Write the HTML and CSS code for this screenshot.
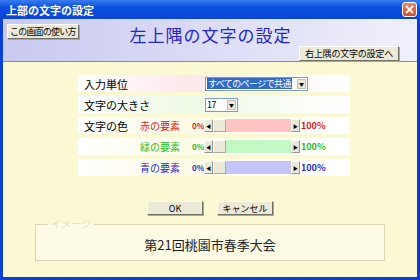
FILE: index.html
```html
<!DOCTYPE html>
<html lang="ja">

<head>
    <meta charset="UTF-8">
    <title>上部の文字の設定</title>
    <link rel="stylesheet" href="styles.css">
</head>

<body>
    <div class="window">
        <div class="title-bar">
            <span class="title-text">上部の文字の設定</span>
            <span class="close-btn">
                <svg width="9" height="9" viewBox="0 0 9 9">
                    <path d="M1 1 L8 8 M8 1 L1 8" stroke="#fff" stroke-width="1.8" />
                </svg>
            </span>
        </div>

        <div class="header">
            <div class="header-top">
                <button class="btn help-btn">この画面の使い方</button>
                <h1 class="page-title">左上隅の文字の設定</h1>
            </div>
            <div class="header-bottom">
                <button class="btn next-btn">右上隅の文字の設定へ</button>
            </div>
        </div>

        <div class="content">
            <div class="form">
                <div class="row row-pink">
                    <span class="label">入力単位</span>
                    <div class="select wide">
                        <span class="select-value"><span class="selected">すべてのページで共通</span></span>
                        <span class="drop-btn">&#9660;</span>
                    </div>
                </div>
                <div class="row row-green">
                    <span class="label">文字の大きさ</span>
                    <div class="select small">
                        <span class="select-value">17</span>
                        <span class="drop-btn">&#9660;</span>
                    </div>
                </div>
                <div class="row row-plain">
                    <span class="label">文字の色</span>
                    <span class="part red">赤の要素</span>
                    <span class="pct red">0%</span>
                    <div class="scroll">
                        <span class="arrow">&#9664;</span>
                        <span class="thumb"></span>
                        <span class="track track-red"></span>
                        <span class="arrow">&#9654;</span>
                    </div>
                    <span class="pct-max red">100%</span>
                </div>
                <div class="row row-plain">
                    <span class="label"></span>
                    <span class="part green">緑の要素</span>
                    <span class="pct green">0%</span>
                    <div class="scroll">
                        <span class="arrow">&#9664;</span>
                        <span class="thumb"></span>
                        <span class="track track-green"></span>
                        <span class="arrow">&#9654;</span>
                    </div>
                    <span class="pct-max green">100%</span>
                </div>
                <div class="row row-plain">
                    <span class="label"></span>
                    <span class="part blue">青の要素</span>
                    <span class="pct blue">0%</span>
                    <div class="scroll">
                        <span class="arrow">&#9664;</span>
                        <span class="thumb"></span>
                        <span class="track track-blue"></span>
                        <span class="arrow">&#9654;</span>
                    </div>
                    <span class="pct-max blue">100%</span>
                </div>
            </div>

            <div class="actions">
                <button class="btn action-btn">OK</button>
                <button class="btn action-btn">キャンセル</button>
            </div>

            <fieldset class="preview">
                <legend>イメージ</legend>
                <p>第21回桃園市春季大会</p>
            </fieldset>
        </div>
    </div>
</body>

</html>
```

FILE: styles.css
```css
body {
    margin: 0;
    width: 420px;
    height: 280px;
    overflow: hidden;
    font-family: "Noto Sans CJK JP", "Liberation Sans", sans-serif;
    font-size: 11px;
}

.window {
    width: 420px;
    height: 280px;
    box-sizing: border-box;
    background-color: #0a3fd6;
    padding: 0 3px 3px 3px;
    display: flex;
    flex-direction: column;
}

.title-bar {
    height: 19px;
    margin: 0 -3px;
    padding: 0 3px 0 6px;
    display: flex;
    align-items: center;
    justify-content: space-between;
    background: linear-gradient(to bottom, #3a7cf0, #0a4ee0 40%, #0a46d4);
}

.title-text {
    color: #fff;
    font-weight: bold;
    font-size: 11px;
}

.close-btn {
    width: 15px;
    height: 15px;
    box-sizing: border-box;
    border: 1px solid #fff;
    border-radius: 3px;
    background: linear-gradient(to bottom, #e88a70, #d44c2a);
    display: flex;
    align-items: center;
    justify-content: center;
}

.header {
    height: 43px;
    box-sizing: border-box;
    border-bottom: 1px solid #7f86c8;
    background: linear-gradient(to right, #c9c9f0, #dcdcf6 50%, #f0f0fc);
    display: flex;
    flex-direction: column;
}

.header-top {
    display: flex;
    align-items: flex-start;
    padding: 5px 0 0 4px;
    height: 23px;
}

.header-bottom {
    display: flex;
    justify-content: flex-end;
    padding-right: 18px;
}

.btn {
    font-family: "Noto Sans CJK JP", "Liberation Sans", sans-serif;
    font-size: 9px;
    line-height: 11px;
    background-color: #ece9d8;
    border: 1px solid;
    border-color: #fff #716f64 #716f64 #fff;
    box-shadow: 1px 1px 0 #aca899;
    padding: 1px 3px;
    color: #000;
    white-space: nowrap;
}

.help-btn {
    padding: 1px 2px;
    letter-spacing: -0.8px;
}

.page-title {
    margin: 1px 0 0 51px;
    font-size: 17px;
    line-height: 20px;
    font-weight: normal;
    color: #2424c8;
    letter-spacing: 1px;
}

.next-btn {
    padding: 1px 5px;
    letter-spacing: -0.2px;
}

.content {
    flex: 1;
    background-color: #fbf8d4;
    display: flex;
    flex-direction: column;
}

.form {
    margin: 13px 0 0 75px;
    width: 272px;
    display: flex;
    flex-direction: column;
    gap: 4px;
}

.row {
    height: 17px;
    display: flex;
    align-items: center;
}

.row-pink {
    background: linear-gradient(to right, #fff, #fde8ec 40%, #fff);
}

.row-green {
    background: linear-gradient(to right, #fff, #eef9e6 40%, #fff);
}

.row-plain {
    background: linear-gradient(to right, #fff, #fdfbe8 40%, #fff);
}

.label {
    width: 127px;
    padding-left: 6px;
    box-sizing: border-box;
    font-size: 11px;
}

.select {
    height: 14px;
    box-sizing: border-box;
    border: 1px solid #7f9db9;
    background-color: #fff;
    display: flex;
    align-items: center;
    gap: 2px;
    padding: 0 1px;
}

.wide {
    width: 103px;
}

.small {
    width: 33px;
}

.select-value {
    flex: 1;
    font-size: 9px;
    line-height: 11px;
    white-space: nowrap;
    letter-spacing: -0.6px;
}

.selected {
    display: inline-block;
    padding: 0 1px;
    background-color: #316ac5;
    color: #fff;
}

.drop-btn {
    width: 9px;
    height: 10px;
    background-color: #ece9d8;
    border: 1px solid #c0c0b8;
    box-sizing: border-box;
    font-size: 5px;
    line-height: 8px;
    text-align: center;
}

.part {
    width: 52px;
    margin-left: -65px;
    font-size: 10px;
}

.pct {
    width: 12px;
    font-size: 8px;
    font-weight: bold;
}

.pct-max {
    font-size: 9px;
    font-weight: bold;
}

.red {
    color: #e01818;
}

.green {
    color: #28c028;
}

.blue {
    color: #2828c0;
}

.scroll {
    width: 96px;
    height: 13px;
    display: flex;
    align-items: stretch;
    margin-right: 1px;
}

.arrow {
    width: 9px;
    background-color: #ece9d8;
    border: 1px solid;
    border-color: #fff #9a988c #9a988c #fff;
    box-sizing: border-box;
    font-size: 5px;
    line-height: 11px;
    text-align: center;
}

.thumb {
    width: 13px;
    background-color: #ece9d8;
    border: 1px solid;
    border-color: #fff #aca899 #aca899 #fff;
    box-sizing: border-box;
}

.track {
    flex: 1;
}

.track-red {
    background-color: #ffc4c4;
}

.track-green {
    background-color: #c4f8c4;
}

.track-blue {
    background-color: #c4c4f8;
}

.actions {
    display: flex;
    justify-content: center;
    gap: 14px;
    margin: 25px 0 0 0;
}

.action-btn {
    width: 56px;
    height: 14px;
    padding: 0;
}

.preview {
    margin: 4px 32px 0 32px;
    height: 42px;
    box-sizing: border-box;
    border: 1px solid #d8d4b4;
    background-color: #fdfbe6;
    padding: 0;
}

.preview legend {
    margin-left: 12px;
    padding: 0 3px;
    color: #e4e0c4;
    font-size: 10px;
    line-height: 10px;
}

.preview p {
    margin: 6px 0 0 0;
    text-align: center;
    font-size: 13px;
    color: #202020;
}
```
